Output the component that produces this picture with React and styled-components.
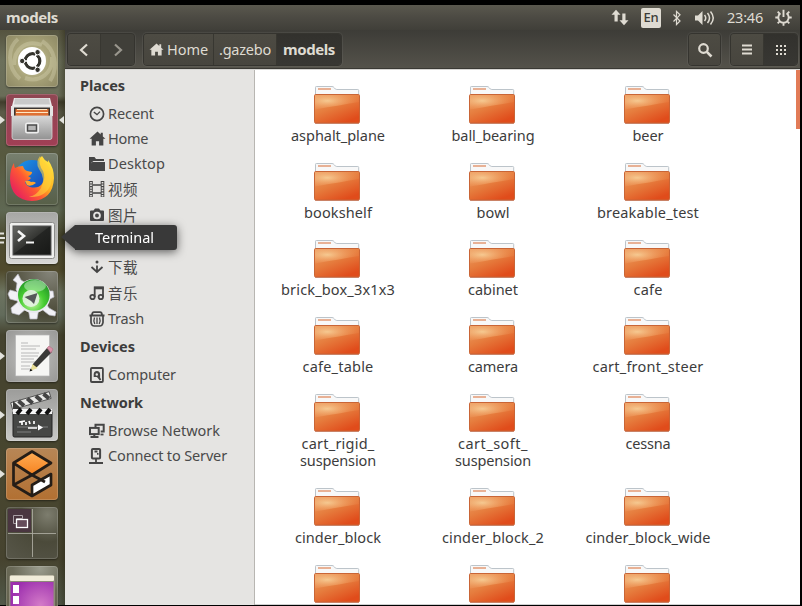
import React, { useLayoutEffect, useRef, useState } from "react";
import styled, { createGlobalStyle } from "styled-components";

const GlobalStyle = createGlobalStyle`
  * { box-sizing: border-box; }
  html, body { margin: 0; background: #000; overflow: hidden; }
  body { font: 14.5px/17px "Noto Sans", "Noto Sans CJK SC", sans-serif; color: #3c3c3c; }
  svg { display: block; flex: none; }
`;

const Screen = styled.div`
  width: 802px;
  height: 606px;
  padding: 5px 2px 1px 0;
  background: #000;
  display: flex;
  flex-direction: column;
  overflow: hidden;
`;

const TopBar = styled.header`
  flex: 0 0 25px;
  display: flex;
  align-items: center;
  justify-content: space-between;
  padding: 0 8px 0 6px;
  color: #dfdbd2;
  background: linear-gradient(#5a584e, #4c4a43 50%, #403f39);
`;

const Title = styled.div`
  font-size: 15px;
  font-weight: 700;
`;

const Indicators = styled.div`
  display: flex;
  align-items: center;
`;

const Keyboard = styled.div`
  width: 20px;
  height: 20px;
  margin: 0 11px 0 12px;
  display: grid;
  place-items: center;
  border-radius: 2px;
  background: #dfdbd2;
  color: #3c3b37;
  font-size: 13px;
  font-weight: 500;
`;

const BluetoothSlot = styled.div`
  margin-right: 13px;
`;

const Clock = styled.div`
  margin: 0 12px;
`;

const Desktop = styled.div`
  flex: 1;
  min-height: 0;
  display: flex;
`;

const Launcher = styled.nav`
  position: relative;
  flex: 0 0 65px;
  padding-top: 5px;
  display: flex;
  flex-direction: column;
  gap: 7px;
  background:
    linear-gradient(90deg, transparent 58px, rgba(35, 33, 15, 0.4)),
    linear-gradient(#55533f 0, #6c705b 30px, #6a6d58 66px, #403d2c 72px, #5b5a48 82px, #57593f 125px,
      #5f6853 180px, #4d4c32 205px, #504a2c 240px, #6d7460 262px, #626b5b 285px, #45432f 305px, #48462f 450px, #46432f 530px, #51594a 575px);
`;

const LauncherRow = styled.div`
  flex: 0 0 52px;
  display: grid;
  grid-template-columns: 6px 52px 7px;
  align-items: center;
`;

const Tile = styled.div`
  width: 52px;
  height: 52px;
  overflow: hidden;
  border-radius: 4px;
  background: ${(p) => p.$fill};
  box-shadow: inset 0 0 0 1px rgba(255, 255, 255, 0.16), 0 1px 2px rgba(0, 0, 0, 0.45);
`;

const Tooltip = styled.div`
  position: absolute;
  z-index: 2;
  left: 75px;
  top: 195px;
  width: 102px;
  height: 25px;
  padding-left: 20px;
  display: flex;
  align-items: center;
  color: #fff;
  background: #393939;
  border-radius: 0 3px 3px 0;
  filter: drop-shadow(0 2px 5px rgba(0, 0, 0, 0.6));
  &::before {
    content: "";
    position: absolute;
    right: 100%;
    top: 0;
    border: solid transparent;
    border-width: 12.5px 14px 12.5px 0;
    border-right-color: #393939;
  }
`;

const Window = styled.main`
  flex: 1;
  min-width: 0;
  display: flex;
  flex-direction: column;
`;

const Toolbar = styled.div`
  flex: 0 0 39px;
  display: flex;
  align-items: flex-start;
  padding: 3px 2px 0;
  background: linear-gradient(#3d3c37, #54524a);
  border-bottom: 1px solid #3a3934;
  color: #dfdbd2;
`;

const Group = styled.div`
  height: 33px;
  display: flex;
  margin-left: ${(p) => p.$gap || 0}px;
  border: 1px solid #35342f;
  border-radius: 4px;
  overflow: hidden;
  box-shadow: 0 0 0 1px rgba(255, 255, 255, 0.06);
`;

const ToolButton = styled.div`
  width: ${(p) => p.$width}px;
  display: flex;
  align-items: center;
  justify-content: center;
  gap: 3px;
  font-size: ${(p) => (p.$active ? 15 : 14.5)}px;
  font-weight: ${(p) => (p.$active ? 700 : 400)};
  background: ${(p) => (p.$active ? "linear-gradient(#32312d, #383733)" : p.$dim ? "#403f39" : "linear-gradient(#4d4b43, #47453e)")};
  color: ${(p) => (p.$dim ? "#99968d" : "#dfdbd2")};
  & + & { border-left: 1px solid #383731; }
`;

const Spacer = styled.div`
  flex: 1;
`;

const Body = styled.div`
  flex: 1;
  min-height: 0;
  display: flex;
  border-top: 1px solid #d7d6d3;
`;

const Sidebar = styled.aside`
  flex: 0 0 190px;
  background: #e5e4e2;
  border-right: 1px solid #b8b6b2;
`;

const Heading = styled.div`
  height: 31px;
  padding-left: 15px;
  display: flex;
  align-items: center;
  font-weight: 700;
  color: #3c3c3c;
`;

const Place = styled.div`
  height: ${(p) => (p.$tall ? 26 : 25)}px;
  padding-left: 24px;
  display: flex;
  align-items: center;
  gap: 2px;
  color: #4a4a4a;
`;

const Files = styled.section`
  position: relative;
  flex: 1;
  display: grid;
  grid-template-columns: repeat(3, 155px);
  grid-auto-rows: max-content;
  align-content: start;
  padding: 16px 0 0 5.5px;
  background: #fff;
  overflow: hidden;
  border-bottom: 1px solid #d0d0d0;
`;

const FileItem = styled.div`
  display: flex;
  flex-direction: column;
  align-items: center;
  padding-bottom: 19px;
`;

const FolderSlot = styled.div`
  margin-right: 2px;
`;

const FileName = styled.div`
  margin-top: 3px;
  display: flex;
  flex-direction: column;
  align-items: center;
`;

const ScrollThumb = styled.div`
  position: absolute;
  right: 0;
  top: 0;
  width: 4px;
  height: 59px;
  background: #e27b57;
`;

const Word = styled.span`
  display: inline-block;
  white-space: pre;
  flex: none;
`;

/* Text tracked so that it fills a given width. */
function Label({ text, width }) {
  const ref = useRef(null);
  const [spacing, setSpacing] = useState(0);
  useLayoutEffect(() => {
    const natural = ref.current.getBoundingClientRect().width;
    setSpacing((width - natural) / text.length);
  }, [text, width]);
  return <Word ref={ref} style={{ letterSpacing: `${spacing}px` }}>{text}</Word>;
}

const ink = "#454545";

const HomeShape = ({ color = ink, size = 16 }) => (
  <svg width={size} height={size} viewBox="0 0 16 16">
    <path fill={color} d="M8 1.500 .5 8.300h2V14.500h4v-4h3v4h4V8.300h2L13 6V2.500h-2v1.800z" />
  </svg>
);

const stroke = { fill: "none", stroke: ink, strokeWidth: 1.8 };

const placeIcons = {
  recent: <><circle cx="8" cy="8" r="6.6" {...stroke} strokeWidth="1.7" /><path d="M4.800 6 8 8.600 11 5.600" {...stroke} strokeWidth="1.300" /></>,
  desktop: <path fill={ink} d="M0 1h5.500L7 3h8v2H4.500L2 7v7.500H0zM3.500 6H16v9H2V7.200z" />,
  video: <><path d="M2 0v16M13.500 0v16" stroke={ink} strokeWidth="3.600" /><path d="M2 1v15M13.500 1v15" stroke="#e5e4e2" strokeWidth="1.700" strokeDasharray="1.500 1.100" /><path d="M4 4h8M4 12h8" {...stroke} strokeWidth="1.300" /></>,
  photo: <><path fill={ink} d="M2 3.500h2.500L6 1.500h4l1.500 2H14q1 0 1 1v8.500q0 1-1 1H2q-1 0-1-1V4.500q0-1 1-1z" /><circle cx="8" cy="8.500" r="2.900" fill={ink} stroke="#e5e4e2" strokeWidth="1.900" /></>,
  download: <><path d="M2.500 8 8 13l5.500-5M8 6.500V13" {...stroke} /><circle cx="8" cy="3" r="1.500" fill={ink} /></>,
  music: <><path d="M5.700 12V2.500h8.300V12" {...stroke} /><path d="M5 3h9.500" stroke={ink} strokeWidth="2.600" /><circle cx="3.500" cy="12" r="2.200" {...stroke} /><circle cx="11.800" cy="12" r="2.200" {...stroke} /></>,
  trash: <><path d="M.5 4.500h15M3 4.200q0-3 2-3h6q2 0 2 3" {...stroke} strokeWidth="1.800" /><path d="M2 5v6.500q.5 3.500 3.500 3.500h5q3 0 3.500-3.500V5" {...stroke} strokeWidth="1.700" /><path d="M5.500 6.500q-1.300 3 .3 6.500M10.500 6.500q1.300 3-.3 6.500M8 6.500V13" {...stroke} strokeWidth="1.300" /></>,
  disk: <><rect x="1.900" y="1" width="12" height="14" rx="1" {...stroke} /><path d="M4.700 10V7.500q0-3.500 3.200-3.500t3.200 3.500V12.500L8 10z" fill={ink} /><path d="m8 8 3.500 5" stroke={ink} strokeWidth="2" /><circle cx="7.800" cy="7.500" r="1.200" fill="#e5e4e2" /></>,
  network: <><path d="M6.500 4V1.700h8.200V8.500h-3" {...stroke} strokeWidth="2" /><path d="M11.500 11.500H14.500" {...stroke} /><rect x="1" y="4.900" width="8.700" height="6.200" {...stroke} strokeWidth="2" /><path d="M1.500 14h8M5.300 11v3" {...stroke} strokeWidth="2" /></>,
  server: <><rect x="2.900" y="1" width="8.200" height="9.600" rx="1" {...stroke} strokeWidth="2" /><path d="M5.500 3.500h3M8 5.800h1.500M7 11v3.500M0 15h14" {...stroke} strokeWidth="1.800" /></>,
};

const PlaceIcon = ({ name }) =>
  name === "home" ? <HomeShape size={17} /> : <svg width="17" height="16" viewBox="0 0 17 16">{placeIcons[name]}</svg>;

const sections = [
  { title: "Places", width: 45, places: [
    ["recent", "Recent", 46], ["home", "Home", 40], ["desktop", "Desktop", 57],
    ["video", "视频", 30, 1], ["photo", "图片", 30, 1], [null, "", 0, 1], ["download", "下载", 30, 1], ["music", "音乐", 30, 1],
    ["trash", "Trash", 36]] },
  { title: "Devices", width: 55, places: [["disk", "Computer", 68]] },
  { title: "Network", width: 63, places: [["network", "Browse Network", 112], ["server", "Connect to Server", 119]] },
];

const files = [
  [["asphalt_plane", 94]], [["ball_bearing", 83]], [["beer", 31]],
  [["bookshelf", 68]], [["bowl", 33]], [["breakable_test", 102]],
  [["brick_box_3x1x3", 114]], [["cabinet", 50]], [["cafe", 29]],
  [["cafe_table", 71]], [["camera", 50]], [["cart_front_steer", 111]],
  [["cart_rigid_", 73], ["suspension", 76]], [["cart_soft_", 70], ["suspension", 76]], [["cessna", 45]],
  [["cinder_block", 86]], [["cinder_block_2", 102]], [["cinder_block_wide", 125]],
  [], [], [],
];

const Folder = () => (
  <svg width="46" height="38" viewBox="0 0 46 38">
    <path d="M1.500 12V1.300q0-.8.8-.8H18q1.400 0 2.200 1.200 1 1.800 2.600 1.800h21q.9 0 .9.900V12z" fill="#f8f8f8" stroke="#bcc4ca" />
    <path d="M4 3h13" stroke="#e6a98a" strokeWidth="1.800" />
    <rect x=".5" y="8.500" width="45" height="28.500" rx="1.200" fill="url(#folderBase)" stroke="#c96536" />
    <path d="M1 9h44v7Q27 19 1 23.500z" fill="url(#folderShine)" />
    <path d="M1 37.500h44" stroke="#a33d18" strokeOpacity=".4" />
  </svg>
);

const Defs = () => (
  <svg width="0" height="0">
    <defs>
      <linearGradient id="folderBase" x1="0" y1="0" x2=".65" y2="1">
        <stop offset="0" stopColor="#ec9f64" /><stop offset=".5" stopColor="#e67d3e" /><stop offset="1" stopColor="#e04c1b" />
      </linearGradient>
      <radialGradient id="folderShine" cx=".28" cy=".4" r=".75">
        <stop offset="0" stopColor="#f9d9a2" stopOpacity=".8" /><stop offset="1" stopColor="#f29a5c" stopOpacity=".1" />
      </radialGradient>
      <linearGradient id="foxBody" x1=".85" y1=".1" x2=".1" y2=".75">
        <stop offset="0" stopColor="#ffe13d" /><stop offset=".4" stopColor="#ffad1f" /><stop offset=".65" stopColor="#ff5a32" /><stop offset="1" stopColor="#ea2858" />
      </linearGradient>
      <linearGradient id="foxGlobe" x1="0" y1="0" x2="1" y2="1">
        <stop offset="0" stopColor="#1b9bed" /><stop offset="1" stopColor="#1935a8" />
      </linearGradient>
      <linearGradient id="metal" x1="0" y1="0" x2="0" y2="1">
        <stop offset="0" stopColor="#d8d8d8" /><stop offset="1" stopColor="#929292" />
      </linearGradient>
      <linearGradient id="glass" x1="0" y1="0" x2="1" y2="1">
        <stop offset="0" stopColor="#686965" /><stop offset=".48" stopColor="#353633" /><stop offset=".5" stopColor="#242523" /><stop offset="1" stopColor="#171816" />
      </linearGradient>
      <radialGradient id="greenBall" cx=".45" cy=".75" r=".75">
        <stop offset="0" stopColor="#c8f9a5" /><stop offset=".5" stopColor="#47cd32" /><stop offset="1" stopColor="#209326" />
      </radialGradient>
      <linearGradient id="orangeTop" x1="0" y1="0" x2="0" y2="1">
        <stop offset="0" stopColor="#ffad55" /><stop offset="1" stopColor="#f58220" />
      </linearGradient>
      <radialGradient id="purple" cx=".7" cy=".55" r=".7">
        <stop offset="0" stopColor="#d47bc8" /><stop offset="1" stopColor="#9c2fae" />
      </radialGradient>
    </defs>
  </svg>
);

const Art = ({ children }) => <svg width="52" height="52" viewBox="0 0 52 52">{children}</svg>;

const apps = [
  { id: "dash", fill: "radial-gradient(circle at 50% 50%, #d8d5b0, #aaa57a 45%, #8d8864)", art: <>
    <g fill="none" stroke="#e9e6c9" strokeOpacity=".28" strokeWidth="4">
      <path d="M8 30C8 14 20 4 36 10M46 22c1 16-12 26-27 21M12 4C2 12 0 32 14 44M44 46c9-14 5-32-8-40" />
    </g>
    <circle cx="26" cy="26" r="14" fill="#fff" />
    <circle cx="26.500" cy="26" r="7.300" fill="none" stroke="#34332d" strokeWidth="3.200" />
    <path d="M26.500 26H14M26.500 26l6-10.400M26.500 26l6 10.400" stroke="#fff" strokeWidth="1.600" />
    <circle cx="26.500" cy="26" r="5.600" fill="#fff" />
    <g fill="#34332d" stroke="#fff" strokeWidth="1"><circle cx="16.200" cy="26" r="2.700" /><circle cx="31.600" cy="17.200" r="2.700" /><circle cx="31.600" cy="34.800" r="2.700" /></g></> },
  { id: "files", left: "arrow", right: true, fill: "linear-gradient(#8f4652, #a13f55)", art: <>
    <path d="M8 4h36l3 12H5z" fill="#ececec" /><path d="M9 4.500h34l1 6H8z" fill="#c9c9c9" /><path d="M5 12h42v10H5z" fill="#e4e4e4" />
    <path d="M8 13.500h36V25H8z" fill="#3a3431" /><path d="M9.500 15h33v9h-33z" fill="#df7134" /><path d="M11 15.500h30M10 18.500h32" stroke="#ffe7c4" strokeWidth="1.200" />
    <path d="M6 22h40v21q0 2.500-2 2.500H8q-2 0-2-2.500z" fill="url(#metal)" stroke="#d4d4d4" strokeWidth=".8" />
    <rect x="19" y="28.500" width="14" height="11" rx="2.500" fill="#eee" /><rect x="21.500" y="31" width="9" height="6" fill="#b5b5b5" stroke="#4b4b4b" strokeWidth="1.500" /></> },
  { id: "firefox", fill: "linear-gradient(#78806f, #606958 60%, #586048)", art: <>
    <circle cx="26" cy="25" r="18" fill="url(#foxGlobe)" />
    <path d="M8 10q0 3 1 5 3-2 8-2 1 4 4 5l5 1q0 3-4 4l3 2q-2 3-6 3 0 4 5 6 8 2 12-3 4-6 1-13-5-7-3-13l2-2q2 4 6 6l0-2q6 8 6 18Q47 47 26 48 5 47 4 26 4 16 8 10z" fill="url(#foxBody)" />
    <path d="M34 3q-5 6-1 13 7 10 2 19-4 7-12 9 17 1 22-13Q48 16 36 8z" fill="#ffd43a" fillOpacity=".6" />
    <path d="M19 28q4-1 6 1 3-1 5 1-5 4-9 2z" fill="#ffa42e" /></> },
  { id: "terminal", left: "bars", fill: "linear-gradient(#a6a6a4, #d8d8d6)", art: <>
    <rect x="3.500" y="10.500" width="45" height="36" rx="2" fill="#efefed" stroke="#8c8c8a" />
    <rect x="7" y="14" width="38" height="29" fill="url(#glass)" stroke="#555" />
    <path d="m12 19 6 5-6 5" fill="none" stroke="#f5f5f5" strokeWidth="2.600" /><path d="M20 30.500h8" stroke="#f5f5f5" strokeWidth="2.200" /></> },
  { id: "builder", fill: "radial-gradient(circle at 85% 0, #85857a, #5b5a49 45%, #4a4937 65%, #646b5b)", art: <>
    <g fill="#f1f1f6" stroke="#b9b9c4" strokeWidth=".7">
      <path d="m7 9 5-6 3 6 8 5-8 10-5-5 1-7z" /><path d="m4 19 11 3v9L4 28l-2-5z" /><path d="m13 30 8 7-8 7-7-2-1-5z" /><path d="M22 37h11l-2 11h-7z" /><path d="m33 36 6-5 4 6 7 4-1 4-6-1z" /><path d="m41 20 6 0 1 6-6 3z" />
    </g>
    <circle cx="27.500" cy="25" r="17" fill="#e9e9ef" />
    <circle cx="27.800" cy="24" r="15.800" fill="url(#greenBall)" /><ellipse cx="29" cy="15" rx="11" ry="6" fill="#e3ffe2" fillOpacity=".45" />
    <circle cx="25" cy="27.500" r="8.500" fill="#e5f2e4" fillOpacity=".9" />
    <path d="m18.500 26 13-4-3.500 11-3-3z" fill="#56595a" /></> },
  { id: "editor", left: "arrow", fill: "radial-gradient(circle at 50% 50%, #c2c2c0, #979795)", art: <>
    <path d="M9.500 5h34v41h-34z" fill="#f6f6f4" stroke="#b5b5b5" strokeWidth=".7" />
    <path d="M15 13h7M15 16h19M15 19h15M15 23h18M15 26h17M15 29h13M15 32h17M15 36h9M15 39h9" stroke="#aaa" strokeWidth=".8" />
    <path d="m25 40 2-6 14-16 5 4-15 15z" fill="#3a3a38" /><path d="m41 18 2-2 4 3-2 4z" fill="#d993a9" stroke="#b16b82" strokeWidth=".6" />
    <path d="m24.500 41 2-7 5 4z" fill="#e9df96" /><path d="m23.500 41.500 3-1-2-2z" fill="#111" /></> },
  { id: "video", left: "arrow", fill: "linear-gradient(#9c9c9a, #c9c9c7)", art: <>
    <g transform="rotate(-16 8 18)"><rect x="6" y="13" width="40" height="7" fill="#e9e9e7" stroke="#333" strokeWidth=".7" /><path d="m14 13.500 4 6m5-6 4 6m5-6 4 6m4-6 4 6" stroke="#444" strokeWidth="4" /></g>
    <path d="M7 12v13l9-5z" fill="#3c3c3a" /><rect x="7" y="22" width="39" height="26" rx="1.500" fill="#464745" stroke="#252525" />
    <path d="M7 20h39v5H7z" fill="#f5f5f5" /><path d="m11 25 4-5m6 5 4-5m6 5 4-5m5 5 4-5" stroke="#111" strokeWidth="4" />
    <path d="M11 38h31M11 43h14" stroke="#999" strokeWidth=".7" /><path d="m13 33 6-1m-3 0v4m4-3v3m3-4 1 3m4-3v3m-6 4h9" stroke="#fff" strokeWidth="1.700" /><path d="m32 35.500 5 3-5 3z" fill="#fff" /></> },
  { id: "gazebo", left: "arrow", fill: "linear-gradient(#b78656, #b27032)", art: <>
    <path d="M26 3.500 45 15 26 27 7.500 15z" fill="url(#orangeTop)" /><path d="M26 37v11l19-11V26z" fill="#fff" />
    <path d="M26 3.500 45 15 26 27 7.500 15zM7.500 15v22L26 48l19-11V26L26 37v11M7.500 37 26 27l13 7" fill="none" stroke="#241d17" strokeWidth="2.700" strokeLinejoin="round" /></> },
  { id: "workspaces", fill: "radial-gradient(circle at 80% 15%, #7d7d6e, #4b4a3a 45%, #58574a)", art: <>
    <path d="M2 2h23v23H2z" fill="#4a3640" /><path d="M26.500 2v48M2 26.500h48" stroke="#aaa99e" strokeWidth=".9" />
    <path d="M7.500 8.500h9v3h-6v5h-3z" fill="none" stroke="#aaa0a5" /><rect x="10.500" y="12.500" width="11" height="8" fill="#654c5a" stroke="#fff" strokeWidth="1.300" /></> },
  { id: "show-desktop", fill: "radial-gradient(circle at 65% 5%, #9a9c8d, #6a6a58 45%, #615f47)", art: <>
    <rect x="3" y="9" width="46" height="48" rx="3" fill="#8d8a78" /><rect x="4" y="9.500" width="44" height="5.500" rx="1" fill="#f1edda" /><rect x="4.500" y="16" width="43" height="42" fill="url(#purple)" /><path d="M7 19h6v8H7zM7 30h6v8H7z" fill="#fff" /></> },
];

const Marker = ({ kind }) => (
  <svg width="6" height="12" viewBox="0 0 6 12">
    {kind === "arrow" && <path d="m0 2 5 4-5 4z" fill="#e2e2dc" />}
    {kind === "bars" && <path d="M0 1.500h4M0 6h5M0 10.500h4" stroke="#e2e2dc" strokeWidth="2" />}
  </svg>
);

const NetworkStatus = () => <svg width="18" height="17" viewBox="0 0 18 17"><path d="m5 .8 4.500 5H6.700v6.700H3.500V5.800H.5zM13 16.200l-4.500-5h2.800V4.500h3.200v6.700h3z" fill="#dfdbd2" /></svg>;
const Bluetooth = () => <svg width="10" height="16" viewBox="0 0 10 16"><path d="m1.500 4.500 6.500 6.500-3.500 3.500V1.500L8 4.800 1.500 11.500" fill="none" stroke="#dfdbd2" strokeWidth="1.200" /></svg>;
const Volume = () => <svg width="20" height="16" viewBox="0 0 20 16"><path d="M0 5.500h3L7.500 1v14L3 10.500H0z" fill="#dfdbd2" /><path d="M9.500 5q2.500 3 0 6M12.500 3q4 5 0 10M15.500 1.500q5.500 6.500 0 13" fill="none" stroke="#dfdbd2" strokeWidth="1.500" /></svg>;
const Session = () => <svg width="17" height="17" viewBox="0 0 17 17"><g stroke="#dfdbd2" fill="none" strokeWidth="1.900"><path d="M5.500 4.300a5.200 5.200 0 1 0 6 0M8.500 .8V8M.3 8.500H3.500m10 0h3.200M2.700 2.700l2.100 2.100m7.400 0 2.100-2.100M2.700 14.300l2.100-2.100m7.400 0 2.100 2.100M8.500 13.500v3.200" /></g></svg>;

const Chevron = ({ next }) => <svg width="12" height="14" viewBox="0 0 12 14"><path d={next ? "m3 1.500 6 5.500-6 5.500" : "M9 1.500 3 7l6 5.500"} fill="none" stroke="currentColor" strokeWidth="2.200" /></svg>;
const Search = () => <svg width="16" height="16" viewBox="0 0 16 16"><circle cx="6.500" cy="6.500" r="4.300" fill="none" stroke="#dfdbd2" strokeWidth="2.200" /><path d="m9.800 9.800 4.700 4.700" stroke="#dfdbd2" strokeWidth="2.600" /></svg>;
const ListView = () => <svg width="12" height="12" viewBox="0 0 12 12"><path d="M1 1.500h10M1 5.500h10M1 9.500h10" stroke="#dfdbd2" strokeWidth="2" /></svg>;
const GridView = () => <svg width="12" height="12" viewBox="0 0 12 12"><path d="M1 2h10M1 6h10M1 10h10" stroke="#dfdbd2" strokeWidth="2" strokeDasharray="2 2" /></svg>;

export default function App() {
  return (
    <Screen>
      <GlobalStyle />
      <TopBar>
        <Title><Label text="models" width={52} /></Title>
        <Indicators>
          <NetworkStatus />
          <Keyboard><Label text="En" width={15} /></Keyboard>
          <BluetoothSlot><Bluetooth /></BluetoothSlot>
          <Volume />
          <Clock><Label text="23:46" width={36} /></Clock>
          <Session />
        </Indicators>
      </TopBar>
      <Desktop>
        <Launcher>
          {apps.map((app) => (
            <LauncherRow key={app.id}>
              <Marker kind={app.left} />
              <Tile $fill={app.fill}><Art>{app.art}</Art></Tile>
              {app.right && <svg width="7" height="10" viewBox="0 0 7 10"><path d="M6 1 1 5l5 4z" fill="#e2e2dc" /></svg>}
            </LauncherRow>
          ))}
          <Tooltip><Label text="Terminal" width={59} /></Tooltip>
        </Launcher>
        <Window>
          <Toolbar>
            <Group>
              <ToolButton $width={32}><Chevron /></ToolButton>
              <ToolButton $width={34} $dim><Chevron next /></ToolButton>
            </Group>
            <Group $gap={8}>
              <ToolButton $width={69}><HomeShape color="#dfdbd2" size={15} /><Label text="Home" width={41} /></ToolButton>
              <ToolButton $width={63}><Label text=".gazebo" width={52} /></ToolButton>
              <ToolButton $width={65} $active><Label text="models" width={52} /></ToolButton>
            </Group>
            <Spacer />
            <Group><ToolButton $width={31}><Search /></ToolButton></Group>
            <Group $gap={9}>
              <ToolButton $width={32}><ListView /></ToolButton>
              <ToolButton $width={34} $active><GridView /></ToolButton>
            </Group>
          </Toolbar>
          <Body>
            <Sidebar>
              {sections.map((section) => (
                <React.Fragment key={section.title}>
                  <Heading><Label text={section.title} width={section.width} /></Heading>
                  {section.places.map(([icon, name, width, tall], i) => (
                    <Place key={i} $tall={tall}>
                      {icon && <><PlaceIcon name={icon} /><Label text={name} width={width} /></>}
                    </Place>
                  ))}
                </React.Fragment>
              ))}
            </Sidebar>
            <Files>
              {files.map((lines, i) => (
                <FileItem key={i}>
                  <FolderSlot><Folder /></FolderSlot>
                  <FileName>{lines.map(([text, width]) => <Label key={text} text={text} width={width} />)}</FileName>
                </FileItem>
              ))}
              <ScrollThumb />
            </Files>
          </Body>
        </Window>
      </Desktop>
      <Defs />
    </Screen>
  );
}
